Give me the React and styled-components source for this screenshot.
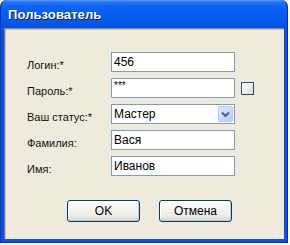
import React from 'react';
import styled, { createGlobalStyle } from 'styled-components';

const Global = createGlobalStyle`
  html, body {
    margin: 0;
    padding: 0;
    background: #ffffff;
  }
  body {
    font-family: "Liberation Sans", Arial, sans-serif;
    font-size: 11px;
    color: #000;
  }
`;

const Window = styled.div`
  width: 288px;
  height: 243px;
  display: flex;
  flex-direction: column;
`;

const TitleBar = styled.div`
  height: 28px;
  flex: none;
  box-sizing: border-box;
  padding: 0 0 0 8px;
  display: flex;
  align-items: center;
  border-radius: 7px 7px 0 0;
  background: linear-gradient(
    #5a9af9 0%,
    #1f6ff5 10%,
    #0d63f2 25%,
    #065cee 55%,
    #0457e6 85%,
    #0150dc 100%
  );
  box-shadow: inset 1px 0 0 #0030b8, inset -1px 0 0 #0030b8;
`;

const Title = styled.span`
  font-family: "Liberation Sans", Arial, sans-serif;
  font-weight: bold;
  font-size: 13px;
  color: #ffffff;
  text-shadow: 1px 1px 0 #0a1a8a;
  letter-spacing: 0.1px;
`;

const Frame = styled.div`
  flex: 1;
  display: flex;
  padding: 0 4px 4px 4px;
  background: #0554e4;
  box-shadow: inset 1px 0 0 #0030b8, inset -1px 0 0 #0030b8, inset 0 -1px 0 #0030b8;
`;

const Client = styled.div`
  flex: 1;
  box-sizing: border-box;
  background: #eeebdc;
  border-top: 1px solid #8e8c7e;
  border-left: 1px solid #7c7a70;
  box-shadow: inset 1px 1px 0 #c9c6b6;
  padding: 23px 0 0 22px;
  display: flex;
  flex-direction: column;
`;

const Form = styled.div`
  display: grid;
  grid-template-columns: 78px 124px 13px;
  column-gap: 6px;
  row-gap: 6px;
  grid-auto-rows: 20px;
  align-items: center;
`;

const Label = styled.label`
  grid-column: 1;
  padding-top: 6px;
  font-size: 11px;
  color: #111;
  white-space: nowrap;
`;

const Field = styled.div`
  grid-column: 2;
  height: 20px;
  box-sizing: border-box;
  border: 1px solid #7f9db9;
  background: #ffffff;
  display: flex;
  align-items: center;
  padding: 0 1px 0 2px;
  font-size: 12px;
  color: #000;
`;

const Value = styled.span`
  flex: 1;
  padding-bottom: ${(p) => (p.$stars ? '5px' : '0')};
  font-size: ${(p) => (p.$stars ? '10px' : '12px')};
`;

const DropButton = styled.div`
  width: 15px;
  height: 16px;
  box-sizing: border-box;
  border: 1px solid #b5c9f4;
  border-radius: 2px;
  background: linear-gradient(135deg, #e2ebfe 0%, #c9d9fc 50%, #b7cdfa 100%);
  display: flex;
  align-items: center;
  justify-content: center;
`;

const Check = styled.div`
  grid-column: 3;
  width: 13px;
  height: 13px;
  box-sizing: border-box;
  border: 1px solid #1c5180;
  background: linear-gradient(135deg, #ffffff 0%, #f2f2ee 45%, #d8d8d0 100%);
`;

const Buttons = styled.div`
  display: flex;
  gap: 19px;
  margin: 24px 0 0 40px;
`;

const Button = styled.button`
  width: 73px;
  height: 22px;
  box-sizing: border-box;
  border: 1px solid #003c74;
  border-radius: 3px;
  background: linear-gradient(#ffffff 0%, #f6f5f1 40%, #ecebe5 75%, #d7d3c8 100%);
  box-shadow: inset -1px -1px 0 #d2cdc0, inset 1px 1px 0 #ffffff;
  font-family: "Liberation Sans", Arial, sans-serif;
  font-size: 12px;
  color: #000;
  padding: 0;
`;

const Chevron = () => (
  <svg width="9" height="7" viewBox="0 0 9 7">
    <path d="M1 1.5 L4.5 5 L8 1.5" fill="none" stroke="#4d6185" strokeWidth="2" />
  </svg>
);

const rows = [
  { label: 'Логин:*', value: '456' },
  { label: 'Пароль:*', value: '***', stars: true, check: true },
  { label: 'Ваш статус:*', value: 'Мастер', select: true },
  { label: 'Фамилия:', value: 'Вася' },
  { label: 'Имя:', value: 'Иванов' },
];

export default function App() {
  return (
    <>
      <Global />
      <Window>
        <TitleBar>
          <Title>Пользователь</Title>
        </TitleBar>
        <Frame>
          <Client>
            <Form>
              {rows.map((row) => (
                <React.Fragment key={row.label}>
                  <Label>{row.label}</Label>
                  <Field>
                    <Value $stars={row.stars}>{row.value}</Value>
                    {row.select && (
                      <DropButton>
                        <Chevron />
                      </DropButton>
                    )}
                  </Field>
                  {row.check && <Check />}
                </React.Fragment>
              ))}
            </Form>
            <Buttons>
              <Button>OK</Button>
              <Button>Отмена</Button>
            </Buttons>
          </Client>
        </Frame>
      </Window>
    </>
  );
}
